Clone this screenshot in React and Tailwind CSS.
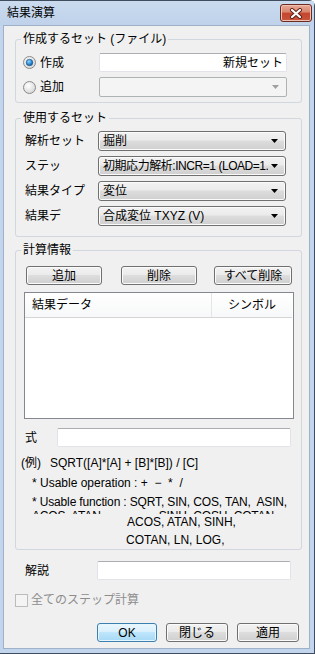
import React from 'react';

const btnBg =
  'bg-[linear-gradient(#f2f2f2,#ebebeb_45%,#dddddd_50%,#cfcfcf)] border border-[#707070] rounded-[3px] shadow-[inset_0_0_0_1px_#fbfbfb]';

const CloseButton = () => (
  <div className="w-[32px] h-[18px] rounded-[3px] border border-[#6d2a1f] bg-[linear-gradient(#e9a996,#d8846d_45%,#c4462f_50%,#c8553c)] flex items-center justify-center shadow-[inset_0_0_0_1px_#eec1b3]">
    <svg width="14" height="11" viewBox="0 0 14 11">
      <path d="M3 2 L11 9 M11 2 L3 9" stroke="#5a1f14" strokeWidth="4" strokeLinecap="round" />
      <path d="M3 2 L11 9 M11 2 L3 9" stroke="#ffffff" strokeWidth="2.2" strokeLinecap="round" />
    </svg>
  </div>
);

const Radio = ({ checked }) => (
  <svg width="13" height="13" viewBox="0 0 13 13">
    <defs>
      <radialGradient id="rbg" cx="0.4" cy="0.35" r="0.7">
        <stop offset="0" stopColor="#ffffff" />
        <stop offset="1" stopColor="#d4d4d4" />
      </radialGradient>
      <radialGradient id="rdot" cx="0.4" cy="0.35" r="0.7">
        <stop offset="0" stopColor="#8fd3ff" />
        <stop offset="0.6" stopColor="#2a8ad4" />
        <stop offset="1" stopColor="#0d4f8b" />
      </radialGradient>
    </defs>
    <circle cx="6.5" cy="6.5" r="6" fill="url(#rbg)" stroke="#8a8a8a" />
    {checked && <circle cx="6.5" cy="6.5" r="3.3" fill="url(#rdot)" stroke="#24507a" strokeWidth="0.6" />}
  </svg>
);

const Arrow = ({ color = '#000' }) => (
  <svg width="7" height="4" viewBox="0 0 7 4">
    <path d="M0 0h7L3.5 4z" fill={color} />
  </svg>
);

const Combo = ({ text, tight }) => (
  <div className={`h-[20px] w-[188px] flex items-center pl-[4px] pr-[7px] ${btnBg}`}>
    <span className={`flex-1 whitespace-nowrap overflow-hidden ${tight ? 'tracking-[-0.45px]' : ''}`}>{text}</span>
    <span className="ml-[3px]">
      <Arrow />
    </span>
  </div>
);

const TextBox = ({ className = '', children }) => (
  <div
    className={`h-[19px] bg-white border border-[#e2e3ea] border-t-[#abadb3] rounded-[2px] flex items-center px-[3px] ${className}`}
  >
    {children}
  </div>
);

const Button = ({ label, className = '' }) => (
  <div className={`h-[19px] flex items-center justify-center ${btnBg} ${className}`}>{label}</div>
);

const Group = ({ title, className = '', children }) => (
  <fieldset className={`ml-[11px] mr-[7px] border border-[#d0d7de] rounded-[3px] ${className}`}>
    <legend className="ml-[5px] px-[2px] leading-[14px]">{title}</legend>
    {children}
  </fieldset>
);

const SelectRow = ({ label, value, tight, className = '' }) => (
  <div className={`flex items-center pl-[9px] ${className}`}>
    <span className="w-[73px] whitespace-nowrap">{label}</span>
    <Combo text={value} tight={tight} />
  </div>
);

export default function App() {
  return (
    <div className="w-[315px] h-[654px] bg-[#c2d5ec] border-t border-r border-b border-[#3f4d5e] rounded-tr-[6px] flex flex-col text-[12px] leading-[14px] text-black font-['Liberation_Sans','Noto_Sans_CJK_JP',sans-serif]">
      {/* title bar */}
      <div className="h-[24px] flex items-start justify-between pl-[7px] pr-[2px] bg-[linear-gradient(#cadbef,#bfd2ea)]">
        <span className="mt-[5px]">結果演算</span>
        <div className="mt-[3px]">
          <CloseButton />
        </div>
      </div>

      {/* dialog body */}
      <div className="flex-1 ml-[3px] mr-[4px] mb-[4px] bg-[#f0f0f0] border border-[#9db1c9] flex flex-col">
        <Group title="作成するセット (ファイル)" className="mt-[6px] pb-[5px]">
          <div className="flex items-center pl-[7px] mt-[7px]">
            <div className="w-[76px] flex items-center gap-[4px]">
              <Radio checked />
              <span>作成</span>
            </div>
            <TextBox className="w-[188px] justify-end">新規セット</TextBox>
          </div>
          <div className="flex items-center pl-[7px] mt-[5px]">
            <div className="w-[76px] flex items-center gap-[4px]">
              <Radio />
              <span>追加</span>
            </div>
            <div className="h-[20px] w-[188px] bg-[#f4f4f4] border border-[#adb2b5] rounded-[2px] flex items-center justify-end pr-[7px]">
              <Arrow color="#a0a0a0" />
            </div>
          </div>
        </Group>

        <Group title="使用するセット" className="mt-[8px] pb-[10px]">
          <SelectRow label="解析セット" value="掘削" className="mt-[6px]" />
          <SelectRow label="ステッ" value="初期応力解析:INCR=1 (LOAD=1." tight className="mt-[5px]" />
          <SelectRow label="結果タイプ" value="変位" className="mt-[5px]" />
          <SelectRow label="結果デ" value="合成変位 TXYZ (V)" className="mt-[5px]" />
        </Group>

        <Group title="計算情報" className="mt-[6px] pb-[2px]">
          <div className="flex pl-[10px] mt-[9px]">
            <Button label="追加" className="w-[76px]" />
            <Button label="削除" className="w-[76px] ml-[19px]" />
            <Button label="すべて削除" className="w-[78px] ml-[17px]" />
          </div>

          <div className="ml-[8px] mt-[7px] w-[270px] h-[127px] bg-white border border-[#828790]">
            <div className="flex h-[25px] border-b border-[#d5d5d5] bg-[linear-gradient(#ffffff,#f7f8f9)] mr-[1px]">
              <div className="w-[187px] flex items-center pl-[7px] border-r border-[#e3e5e8]">結果データ</div>
              <div className="w-[80px] flex items-center justify-center">シンボル</div>
            </div>
          </div>

          <div className="flex items-center pl-[9px] mt-[9px]">
            <span className="w-[32px]">式</span>
            <TextBox className="w-[234px]" />
          </div>

          <div className="flex pl-[5px] mt-[9px]">
            <span>(例)</span>
            <span className="ml-[9px]">SQRT([A]*[A] + [B]*[B]) / [C]</span>
          </div>
          <div className="pl-[16px] mt-[6px] whitespace-pre">* Usable operation : +  −  *  /</div>
          <div className="pl-[16px] mt-[5px] h-[19px] overflow-hidden tracking-[-0.15px]">
            <div className="whitespace-pre">* Usable function : SQRT, SIN, COS, TAN,  ASIN,</div>
            <div className="flex whitespace-pre">
              <span>ACOS, ATAN</span>
              <span className="ml-[58px]">SINH, COSH, COTAN</span>
            </div>
          </div>
          <div className="pl-[111px] mt-[1px]">ACOS, ATAN, SINH,</div>
          <div className="pl-[110px] mt-[4px]">COTAN, LN, LOG,</div>
        </Group>

        <div className="flex items-center pl-[21px] mt-[11px]">
          <span className="w-[72px]">解説</span>
          <TextBox className="w-[194px]" />
        </div>

        <div className="flex items-center pl-[11px] mt-[13px] text-[#8d8d8d]">
          <div className="w-[13px] h-[13px] border border-[#bcbcbc] bg-[#f4f4f4]" />
          <span className="ml-[3px]">全てのステップ計算</span>
        </div>

        <div className="flex pl-[93px] mt-[16px]">
          <div className="w-[60px] h-[19px] flex items-center justify-center rounded-[3px] border border-[#3c7fb1] bg-[linear-gradient(#eaf6fd,#d9f0fc_45%,#bee6fd_50%,#a7d9f5)] shadow-[inset_0_0_0_1px_#e6f6ff]">
            OK
          </div>
          <Button label="閉じる" className="w-[62px] ml-[9px]" />
          <Button label="適用" className="w-[62px] ml-[9px]" />
        </div>
      </div>
    </div>
  );
}
